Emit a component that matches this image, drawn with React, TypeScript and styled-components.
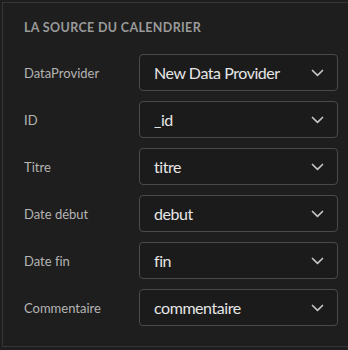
import styled, { createGlobalStyle } from "styled-components";

const GlobalStyle = createGlobalStyle`
  html, body {
    margin: 0;
    background: #1e1e1e;
  }
  body {
    font-family: Lato, "Noto Sans", sans-serif;
    font-variant-ligatures: none;
  }
`;

const fields = [
  { label: "DataProvider", value: "New Data Provider" },
  { label: "ID", value: "_id" },
  { label: "Titre", value: "titre" },
  { label: "Date début", value: "debut" },
  { label: "Date fin", value: "fin" },
  { label: "Commentaire", value: "commentaire" },
];

const Chevron = () => (
  <svg width="13" height="8" viewBox="0 0 13 8" fill="none">
    <path
      d="M1.5 1.5 L6.5 6.3 L11.5 1.5"
      stroke="#c4c4c4"
      strokeWidth="1.7"
      strokeLinecap="round"
      strokeLinejoin="round"
    />
  </svg>
);

const App = () => {
  return (
    <>
      <GlobalStyle />
      <StyledPage>
        <StyledPanel>
          <StyledTitle>La source du calendrier</StyledTitle>
          <StyledForm>
            {fields.map((f) => (
              <StyledRow key={f.label}>
                <StyledLabel>{f.label}</StyledLabel>
                <StyledSelect>
                  <span>{f.value}</span>
                  <Chevron />
                </StyledSelect>
              </StyledRow>
            ))}
          </StyledForm>
        </StyledPanel>
      </StyledPage>
    </>
  );
};

export default App;

const StyledPage = styled.div`
  width: 348px;
  height: 350px;
  padding: 2px 0 0 2px;
  box-sizing: border-box;
  background: #1e1e1e;
  overflow: hidden;
`;

const StyledPanel = styled.div`
  height: 345px;
  box-sizing: border-box;
  border-top: 1px solid #363636;
  border-left: 1px solid #363636;
  border-bottom: 1px solid #363636;
  padding: 17px 10px 0 21px;
  background: #1e1e1e;
`;

const StyledTitle = styled.div`
  color: #9a9a9a;
  font-size: 12.5px;
  font-weight: 700;
  letter-spacing: 0.35px;
  text-transform: uppercase;
  line-height: 16px;
  margin-bottom: 18px;
`;

const StyledForm = styled.div`
  display: flex;
  flex-direction: column;
  gap: 10px;
`;

const StyledRow = styled.div`
  display: grid;
  grid-template-columns: 115px 1fr;
  align-items: center;
`;

const StyledLabel = styled.span`
  color: #b4b4b4;
  font-size: 13px;
`;

const StyledSelect = styled.div`
  display: flex;
  align-items: center;
  justify-content: space-between;
  height: 37px;
  box-sizing: border-box;
  padding: 0 13px 0 14px;
  border: 1px solid #4a4a4a;
  border-radius: 4px;
  background: #1b1b1b;
  color: #e6e6e6;
  font-size: 16px;
  letter-spacing: -0.45px;
`;
